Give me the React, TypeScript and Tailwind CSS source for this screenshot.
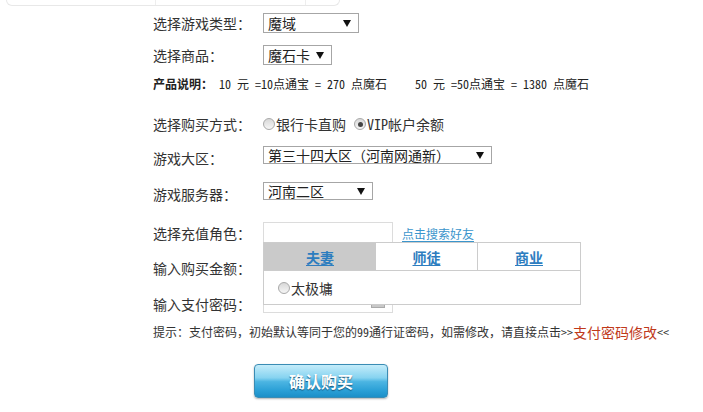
import React from "react";

const F = { fontFamily: '"Noto Sans Mono CJK SC", "Noto Sans CJK SC", "Noto Sans", sans-serif' };

function Select({ w, text }: { w: string; text: string }) {
  return (
    <div
      className={`${w} h-full border border-[#a6a6a6] bg-white flex items-center justify-between pl-[4px] pr-[7px] text-[14px] leading-none text-[#222]`}
    >
      <span>{text}</span>
      <span className="w-0 h-0 border-l-[4px] border-r-[4px] border-t-[7px] border-l-transparent border-r-transparent border-t-[#111]" />
    </div>
  );
}

function Radio({ checked }: { checked?: boolean }) {
  return (
    <span className="inline-flex w-[12px] h-[12px] rounded-full border border-[#a9a9a9] bg-gradient-to-b from-[#d8d8d8] to-[#f6f6f6] items-center justify-center shrink-0">
      {checked && <span className="w-[5px] h-[5px] rounded-full bg-[#444]" />}
    </span>
  );
}

function Label({ children, extra = "" }: { children: React.ReactNode; extra?: string }) {
  return <div className={`w-[110px] shrink-0 text-[14px] leading-none text-[#333] ${extra}`}>{children}</div>;
}

export default function App() {
  return (
    <div className="w-[703px] h-[412px] bg-white overflow-hidden text-[#333]" style={F}>
      {/* faint top box */}
      <div className="ml-[6px] w-[334px] h-[6px] border-x border-b border-[#e8e8e8] rounded-b-[8px] flex">
        <div className="w-[149px] border-r border-[#eeeeee]" />
        <div className="w-[150px] border-r border-[#eeeeee]" />
      </div>

      <div className="pl-[153px]">
        {/* row 1 */}
        <div className="mt-[7px] h-[20px] flex items-center">
          <Label>选择游戏类型：</Label>
          <Select w="w-[96px]" text="魔域" />
        </div>
        {/* row 2 */}
        <div className="mt-[12px] h-[20px] flex items-center">
          <Label>选择商品：</Label>
          <Select w="w-[69px]" text="魔石卡" />
        </div>
        {/* row 3 */}
        <div className="mt-[11px] h-[16px] flex items-center text-[12px] leading-none text-[#222] whitespace-pre">
          <span className="font-bold w-[66px]">产品说明：</span>
          <span className="w-[196px]">10 元 =10点通宝 = 270 点魔石</span>
          <span>50 元 =50点通宝 = 1380 点魔石</span>
        </div>
        {/* row 4 */}
        <div className="mt-[24px] h-[16px] flex items-center">
          <Label>选择购买方式：</Label>
          <div className="flex items-center text-[14px] leading-none text-[#333]">
            <Radio />
            <span className="ml-[1px]">银行卡直购</span>
            <span className="ml-[8px]" />
            <Radio checked />
            <span className="ml-[1px]">VIP帐户余额</span>
          </div>
        </div>
        {/* row 5 */}
        <div className="mt-[14px] h-[18px] flex items-center">
          <Label extra="pt-[6px]">游戏大区：</Label>
          <Select w="w-[229px]" text="第三十四大区（河南网通新）" />
        </div>
        {/* row 6 */}
        <div className="mt-[18px] h-[18px] flex items-center">
          <Label extra="pt-[6px]">游戏服务器：</Label>
          <Select w="w-[110px]" text="河南二区" />
        </div>
        {/* row 7 */}
        <div className="mt-[22px] h-[21px] flex items-center">
          <Label>选择充值角色：</Label>
          <div className="relative h-full flex items-center">
            <div className="w-[130px] h-full border border-[#dcdcdc] bg-white" />
            <a className="ml-[9px] text-[12px] leading-none text-[#3b95cc] underline underline-offset-2 pt-[2px]">
              点击搜索好友
            </a>
            {/* popup */}
            <div className="absolute left-0 top-[20px] w-[318px] h-[63px] border border-[#cccccc] bg-white z-10 flex flex-col">
              <div className="h-[28px] flex border-b border-[#cccccc] text-[14px] font-bold leading-none">
                <div className="w-[112px] bg-[#cacaca] flex items-center justify-center text-[#2d7dbf] underline underline-offset-2">
                  夫妻
                </div>
                <div className="w-[102px] border-r border-[#cccccc] flex items-center justify-center text-[#2d7dbf] underline underline-offset-2">
                  师徒
                </div>
                <div className="flex-1 flex items-center justify-center text-[#2d7dbf] underline underline-offset-2">
                  商业
                </div>
              </div>
              <div className="flex-1 flex items-center pl-[14px] text-[14px] leading-none text-[#333]">
                <Radio />
                <span className="ml-[1px]">太极墉</span>
              </div>
            </div>
          </div>
        </div>
        {/* row 8 */}
        <div className="mt-[15px] h-[20px] flex items-center">
          <Label>输入购买金额：</Label>
          <div className="w-[130px] h-full border border-[#dcdcdc] bg-white" />
        </div>
        {/* row 9 */}
        <div className="mt-[16px] h-[19px] flex items-center">
          <Label>输入支付密码：</Label>
          <div className="w-[130px] h-full border border-[#dcdcdc] bg-white flex items-end justify-end pr-[7px] pb-[4px]">
            <div className="w-[14px] h-[5px] bg-[#c8c8c8] border border-[#aaaaaa]" />
          </div>
        </div>
        {/* hint */}
        <div className="mt-[12px] h-[14px] flex items-center text-[12px] leading-none text-[#333] whitespace-pre">
          <span>提示：支付密码，初始默认等同于您的99通行证密码，如需修改，请直接点击&gt;&gt;</span>
          <span className="text-[14px] text-[#c0391a]">支付密码修改</span>
          <span>&lt;&lt;</span>
        </div>
        {/* button */}
        <div className="mt-[25px] ml-[101px]">
          <button
            className="w-[134px] h-[34px] rounded-[4px] border border-[#3a8cb4] bg-[linear-gradient(to_bottom,#c4ecfa_0%,#86d3f0_40%,#4cb5e2_52%,#2a9fd6_80%,#1c8fc8_100%)] text-white text-[16px] font-bold leading-none shadow-[0_1px_2px_rgba(0,0,0,0.3)]"
            style={{ textShadow: "0 1px 1px #17557a" }}
          >
            确认购买
          </button>
        </div>
      </div>
    </div>
  );
}
